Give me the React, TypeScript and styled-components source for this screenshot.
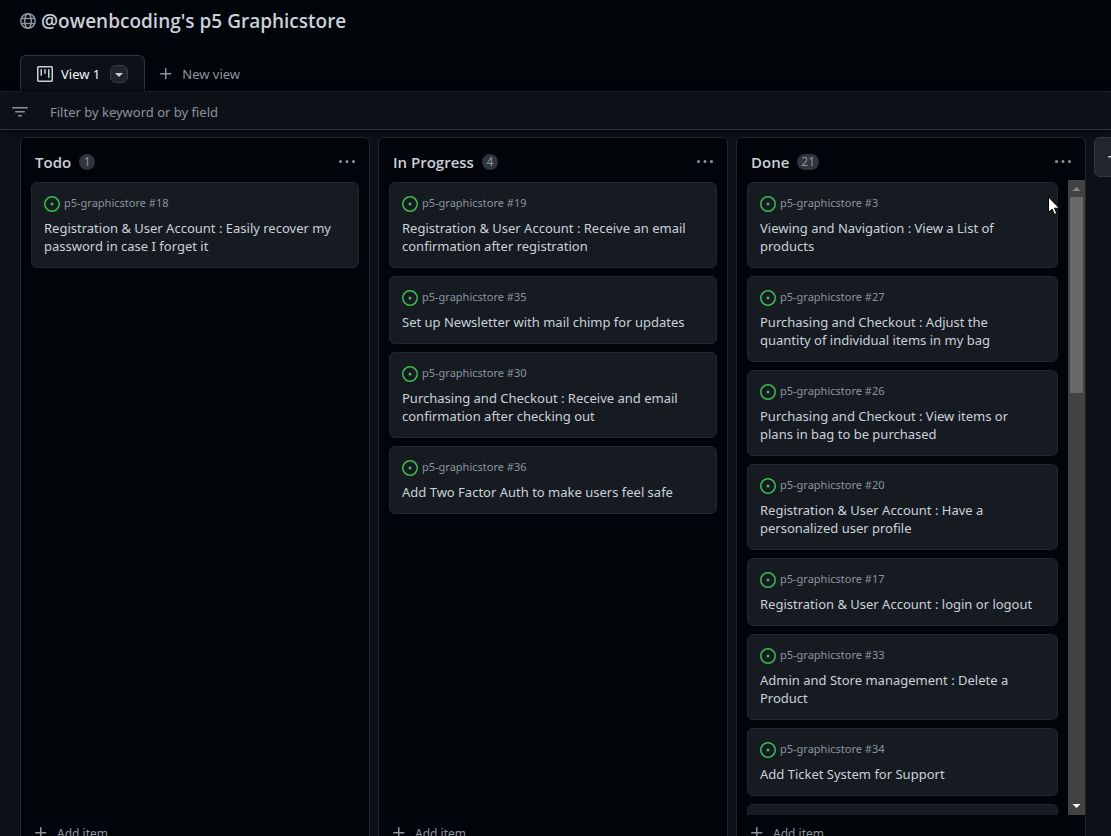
import React from "react";
import styled, { createGlobalStyle } from "styled-components";

const color = {
  inset: "#010409",
  canvas: "#0d1117",
  card: "#161b22",
  border: "#30363d",
  borderMuted: "#21262d",
  text: "#c9d1d9",
  muted: "#8b949e",
  badge: "#2f343d",
  open: "#3fb950",
};

const GlobalStyle = createGlobalStyle`
  *, *::before, *::after { box-sizing: border-box; }
  body {
    margin: 0;
    background: ${color.canvas};
    color: ${color.text};
    font-family: "Noto Sans", "Open Sans", sans-serif;
    font-size: 13px;
  }
  button, input { font: inherit; color: inherit; }
`;

const IconSvg = styled.svg`
  flex: none;
  display: block;
  width: 16px;
  height: 16px;
  fill: currentColor;
`;

const Page = styled.div`
  display: flex;
  flex-direction: column;
  height: 100vh;
  overflow: hidden;
`;

const Header = styled.header`
  display: flex;
  flex: none;
  align-items: center;
  gap: 5px;
  height: 55px;
  padding: 0 20px 14px;
  background: ${color.inset};
  color: ${color.muted};
`;

const Title = styled.h1`
  margin: 0;
  font-family: "Open Sans", sans-serif;
  font-size: 19px;
  line-height: 28px;
  font-weight: 600;
  color: ${color.text};
`;

const TabBar = styled.nav`
  display: flex;
  flex: none;
  height: 37px;
  padding: 0 20px;
  background: ${color.inset};
  border-bottom: 1px solid ${color.border};
`;

const Tab = styled.div`
  display: flex;
  align-items: center;
  gap: 10px;
  height: 37px;
  padding: 0 16px;
  background: ${color.canvas};
  border: 1px solid ${color.border};
  border-bottom: 0;
  border-radius: 6px 6px 0 0;
`;

const TabLink = styled.a`
  display: flex;
  align-items: center;
  gap: 8px;
  color: #f0f6fc;
  text-decoration: none;
  svg { color: ${color.text}; }
`;

const TabMenuButton = styled.button`
  display: grid;
  place-items: center;
  width: 18px;
  height: 18px;
  padding: 0;
  background: ${color.borderMuted};
  border: 1px solid #363b42;
  border-radius: 6px;
`;

const GhostButton = styled.button`
  display: flex;
  align-items: center;
  gap: 8px;
  padding: 2px 13px 0;
  background: none;
  border: 0;
  color: ${color.muted};
`;

const FilterBar = styled.label`
  position: relative;
  z-index: 1;
  display: flex;
  align-items: center;
  gap: 22px;
  height: 38px;
  flex: none;
  padding: 2px 12px 0;
  background: ${color.canvas};
  border-bottom: 1px solid ${color.border};
  box-shadow: 0 0 8px ${color.inset};
  color: ${color.muted};
`;

const FilterInput = styled.input`
  flex: 1;
  min-width: 0;
  height: 30px;
  padding: 0;
  background: none;
  border: 0;
  outline: none;
  &::placeholder { color: ${color.muted}; opacity: 1; }
`;

const Board = styled.main`
  display: flex;
  align-items: flex-start;
  gap: 8px;
  padding: 7px 20px;
`;

const Column = styled.section`
  flex: none;
  width: 350px;
  background: ${color.inset};
  border: 1px solid ${color.borderMuted};
  border-radius: 6px;
`;

const ColumnHeader = styled.header`
  display: flex;
  align-items: center;
  gap: 8px;
  height: 42px;
  padding: 6px 14px 0;
`;

const ColumnTitle = styled.h2`
  margin: 0;
  font-family: "Open Sans", sans-serif;
  font-size: 15px;
  line-height: 22px;
  font-weight: 600;
`;

const Count = styled.span`
  min-width: 16px;
  padding: 0 4px;
  border-radius: 8px;
  background: ${color.badge};
  color: ${color.muted};
  font-size: 12px;
  line-height: 16px;
  text-align: center;
`;

const MenuButton = styled.button`
  margin-left: auto;
  padding: 0;
  background: none;
  border: 0;
  color: ${color.muted};
`;

const ListArea = styled.div`
  display: flex;
  height: calc(100vh - 201px);
`;

const CardList = styled.ul`
  flex: 1;
  min-width: 0;
  margin: 0;
  padding: 2px 10px;
  overflow: hidden;
  list-style: none;
`;

const Card = styled.li`
  margin-bottom: 8px;
  padding: 12px;
  background: ${color.card};
  border: 1px solid ${color.borderMuted};
  border-radius: 6px;
`;

const CardMeta = styled.div`
  display: flex;
  align-items: flex-start;
  gap: 4px;
  height: 18px;
  margin-bottom: 6px;
  color: ${color.muted};
  font-size: 11px;
  line-height: 16px;
  svg { color: ${color.open}; align-self: center; }
`;

const CardLink = styled.a`
  display: block;
  color: ${color.text};
  line-height: 18px;
  text-decoration: none;
  white-space: pre-line;
`;

const Scrollbar = styled.div`
  display: flex;
  flex-direction: column;
  width: 17px;
  background: #424242;
`;

const ScrollArrow = styled.svg`
  display: block;
  flex: none;
  width: 17px;
  height: 17px;
`;

const ScrollThumb = styled.div`
  width: 13px;
  height: 196px;
  margin: 0 2px auto;
  background: #686868;
`;

const AddItem = styled(GhostButton)`
  width: 100%;
  height: 36px;
  padding: 0 12px;
  font-size: 12px;
`;

const AddColumn = styled.button`
  flex: none;
  padding: 11px;
  background: ${color.borderMuted};
  border: 1px solid #363b42;
  border-radius: 6px;
`;

const Pointer = styled.svg`
  position: absolute;
  left: 1048px;
  top: 196px;
  z-index: 2;
  pointer-events: none;
`;

const iconPaths = {
  plus: "M7.75 2a.75.75 0 0 1 .75.75V7h4.25a.75.75 0 0 1 0 1.5H8.5v4.25a.75.75 0 0 1-1.5 0V8.5H2.75a.75.75 0 0 1 0-1.5H7V2.75A.75.75 0 0 1 7.75 2Z",
  filter:
    "M.75 3h14.5a.75.75 0 0 1 0 1.5H.75a.75.75 0 0 1 0-1.5ZM3 7.75A.75.75 0 0 1 3.75 7h8.5a.75.75 0 0 1 0 1.5h-8.5A.75.75 0 0 1 3 7.75Zm3 4a.75.75 0 0 1 .75-.75h2.5a.75.75 0 0 1 0 1.5h-2.5a.75.75 0 0 1-.75-.75Z",
  issue:
    "M8 9.5a1.5 1.5 0 1 0 0-3 1.5 1.5 0 0 0 0 3ZM8 0a8 8 0 1 1 0 16A8 8 0 0 1 8 0ZM1.5 8a6.5 6.5 0 1 0 13 0 6.5 6.5 0 0 0-13 0Z",
  kebab:
    "M8 9a1.5 1.5 0 1 0 0-3 1.5 1.5 0 0 0 0 3ZM1.5 9a1.5 1.5 0 1 0 0-3 1.5 1.5 0 0 0 0 3Zm13 0a1.5 1.5 0 1 0 0-3 1.5 1.5 0 0 0 0 3Z",
  triangle:
    "m4.427 7.427 3.396 3.396a.25.25 0 0 0 .354 0l3.396-3.396A.25.25 0 0 0 11.396 7H4.604a.25.25 0 0 0-.177.427Z",
  project:
    "M1.75 0h12.5C15.216 0 16 .784 16 1.75v12.5A1.75 1.75 0 0 1 14.25 16H1.75A1.75 1.75 0 0 1 0 14.25V1.75C0 .784.784 0 1.75 0ZM1.5 1.75v12.5c0 .138.112.25.25.25h12.5a.25.25 0 0 0 .25-.25V1.75a.25.25 0 0 0-.25-.25H1.75a.25.25 0 0 0-.25.25ZM11.75 3a.75.75 0 0 1 .75.75v7.5a.75.75 0 0 1-1.5 0v-7.5a.75.75 0 0 1 .75-.75Zm-8.25.75a.75.75 0 0 1 1.5 0v5.5a.75.75 0 0 1-1.5 0ZM8 3a.75.75 0 0 1 .75.75v3.5a.75.75 0 0 1-1.5 0v-3.5A.75.75 0 0 1 8 3Z",
};

function Icon({ name }: { name: keyof typeof iconPaths }) {
  return (
    <IconSvg viewBox="0 0 16 16" aria-hidden="true">
      <path fillRule="evenodd" d={iconPaths[name]} />
    </IconSvg>
  );
}

function GlobeIcon() {
  return (
    <IconSvg viewBox="0 0 16 16" aria-hidden="true">
      <g fill="none" stroke="currentColor" strokeWidth="1.5">
        <circle cx="8" cy="8" r="7.25" />
        <ellipse cx="8" cy="8" rx="3.25" ry="7.25" />
        <path d="M1.2 5.5h13.6M1.2 10.5h13.6" />
      </g>
    </IconSvg>
  );
}

type Item = { id: number; title: string };
type ColumnData = { name: string; count: number; items: Item[]; scrolls?: boolean };

const columns: ColumnData[] = [
  {
    name: "Todo",
    count: 1,
    items: [{ id: 18, title: "Registration & User Account : Easily recover my\npassword in case I forget it" }],
  },
  {
    name: "In Progress",
    count: 4,
    items: [
      { id: 19, title: "Registration & User Account : Receive an email\nconfirmation after registration" },
      { id: 35, title: "Set up Newsletter with mail chimp for updates" },
      { id: 30, title: "Purchasing and Checkout : Receive and email\nconfirmation after checking out" },
      { id: 36, title: "Add Two Factor Auth to make users feel safe" },
    ],
  },
  {
    name: "Done",
    count: 21,
    scrolls: true,
    items: [
      { id: 3, title: "Viewing and Navigation : View a List of\nproducts" },
      { id: 27, title: "Purchasing and Checkout : Adjust the\nquantity of individual items in my bag" },
      { id: 26, title: "Purchasing and Checkout : View items or\nplans in bag to be purchased" },
      { id: 20, title: "Registration & User Account : Have a\npersonalized user profile" },
      { id: 17, title: "Registration & User Account : login or logout" },
      { id: 33, title: "Admin and Store management : Delete a\nProduct" },
      { id: 34, title: "Add Ticket System for Support" },
    ],
  },
];

function BoardColumn({ column }: { column: ColumnData }) {
  return (
    <Column>
      <ColumnHeader>
        <ColumnTitle>{column.name}</ColumnTitle>
        <Count>{column.count}</Count>
        <MenuButton aria-label={`Actions for ${column.name}`}>
          <Icon name="kebab" />
        </MenuButton>
      </ColumnHeader>
      <ListArea>
        <CardList>
          {column.items.map((item) => (
            <Card key={item.id}>
              <CardMeta>
                <Icon name="issue" />
                <span>p5-graphicstore #{item.id}</span>
              </CardMeta>
              <CardLink href={`#issue-${item.id}`}>{item.title}</CardLink>
            </Card>
          ))}
          {column.scrolls && <Card aria-hidden="true" />}
        </CardList>
        {column.scrolls && (
          <Scrollbar aria-hidden="true">
            <ScrollArrow viewBox="0 0 17 17">
              <path d="M4.5 11 8.5 7l4 4z" fill="#8a8a8a" />
            </ScrollArrow>
            <ScrollThumb />
            <ScrollArrow viewBox="0 0 17 17">
              <path d="M4.5 6h8l-4 4z" fill="#fff" />
            </ScrollArrow>
          </Scrollbar>
        )}
      </ListArea>
      <AddItem>
        <Icon name="plus" />
        Add item
      </AddItem>
    </Column>
  );
}

export default function App() {
  return (
    <Page>
      <GlobalStyle />
      <Header>
        <GlobeIcon />
        <Title>@owenbcoding's p5 Graphicstore</Title>
      </Header>
      <TabBar>
        <Tab>
          <TabLink href="#view-1">
            <Icon name="project" />
            View 1
          </TabLink>
          <TabMenuButton aria-label="View options">
            <Icon name="triangle" />
          </TabMenuButton>
        </Tab>
        <GhostButton>
          <Icon name="plus" />
          New view
        </GhostButton>
      </TabBar>
      <FilterBar>
        <Icon name="filter" />
        <FilterInput aria-label="Filter items" placeholder="Filter by keyword or by field" />
      </FilterBar>
      <Board>
        {columns.map((column) => (
          <BoardColumn key={column.name} column={column} />
        ))}
        <AddColumn aria-label="Add column">
          <Icon name="plus" />
        </AddColumn>
      </Board>
      <Pointer width="12" height="19" viewBox="0 0 12 19" aria-hidden="true">
        <path
          d="M.5 1v15.5l3.6-3.4 2.3 5.3 2.4-1-2.3-5.2h4.9z"
          fill="#fff"
          stroke="#000"
          strokeWidth="1"
        />
      </Pointer>
    </Page>
  );
}
